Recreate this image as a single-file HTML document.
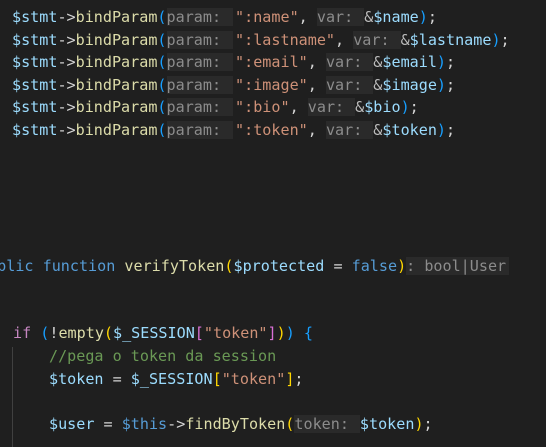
<!DOCTYPE html>
<html><head><style>
html,body{margin:0;padding:0;background:#1f1f1f;width:546px;height:447px;overflow:hidden}
.l{position:absolute;white-space:pre;font-family:"DejaVu Sans Mono","Liberation Mono",monospace;font-size:15.1px;line-height:22.6px;height:22.6px;color:#d4d4d4}
.v{color:#9cdcfe}.f{color:#dcdcaa}.s{color:#ce9178}.k{color:#569cd6}.c{color:#6a9955}.p{color:#c586c0}
.b1{color:#ffd700}.b2{color:#da70d6}.b3{color:#179fff}
.h{color:#8c8c8c;background:#2a2a2a;padding-right:3px}
.hp{color:#8c8c8c;background:#2a2a2a;padding-right:12px;margin-right:2px}
.hv{color:#8c8c8c;background:#2a2a2a;padding-right:11px}
.a{color:#bbbbbb}
</style></head><body>
<div style="position:absolute;left:12px;top:347px;width:1px;height:100px;background:#404040"></div>
<div class="l" style="left:12px;top:6px"><span class="v">$stmt</span>-&gt;<span class="f">bindParam</span><span class="b3">(</span><span class="hp">param:</span><span class="s">":name"</span>, <span class="hv">var:</span><span class="a">&amp;</span><span class="v">$name</span><span class="b3">)</span>;</div>
<div class="l" style="left:12px;top:28.6px"><span class="v">$stmt</span>-&gt;<span class="f">bindParam</span><span class="b3">(</span><span class="hp">param:</span><span class="s">":lastname"</span>, <span class="hv">var:</span><span class="a">&amp;</span><span class="v">$lastname</span><span class="b3">)</span>;</div>
<div class="l" style="left:12px;top:51.2px"><span class="v">$stmt</span>-&gt;<span class="f">bindParam</span><span class="b3">(</span><span class="hp">param:</span><span class="s">":email"</span>, <span class="hv">var:</span><span class="a">&amp;</span><span class="v">$email</span><span class="b3">)</span>;</div>
<div class="l" style="left:12px;top:73.8px"><span class="v">$stmt</span>-&gt;<span class="f">bindParam</span><span class="b3">(</span><span class="hp">param:</span><span class="s">":image"</span>, <span class="hv">var:</span><span class="a">&amp;</span><span class="v">$image</span><span class="b3">)</span>;</div>
<div class="l" style="left:12px;top:96.4px"><span class="v">$stmt</span>-&gt;<span class="f">bindParam</span><span class="b3">(</span><span class="hp">param:</span><span class="s">":bio"</span>, <span class="hv">var:</span><span class="a">&amp;</span><span class="v">$bio</span><span class="b3">)</span>;</div>
<div class="l" style="left:12px;top:119px"><span class="v">$stmt</span>-&gt;<span class="f">bindParam</span><span class="b3">(</span><span class="hp">param:</span><span class="s">":token"</span>, <span class="hv">var:</span><span class="a">&amp;</span><span class="v">$token</span><span class="b3">)</span>;</div>
<div class="l" style="left:-21px;top:254.6px"><span class="k">public</span> <span class="k">function</span> <span class="f">verifyToken</span><span class="b1">(</span><span class="v">$protected</span> = <span class="k">false</span><span class="b1">)</span><span class="h">: bool|User</span></div>
<div class="l" style="left:13px;top:322.3px"><span class="p">if</span> <span class="b3">(</span>!<span class="f">empty</span><span class="b1">(</span><span class="v">$_SESSION</span><span class="b2">[</span><span class="s">"token"</span><span class="b2">]</span><span class="b1">)</span><span class="b3">)</span> <span class="b3">{</span></div>
<div class="l" style="left:49px;top:344.9px"><span class="c">//pega o token da session</span></div>
<div class="l" style="left:49px;top:367.5px"><span class="v">$token</span> = <span class="v">$_SESSION</span><span class="b1">[</span><span class="s">"token"</span><span class="b1">]</span>;</div>
<div class="l" style="left:49px;top:412.7px"><span class="v">$user</span> = <span class="k">$this</span>-&gt;<span class="f">findByToken</span><span class="b1">(</span><span class="hv">token:</span><span class="v">$token</span><span class="b1">)</span>;</div>
</body></html>
